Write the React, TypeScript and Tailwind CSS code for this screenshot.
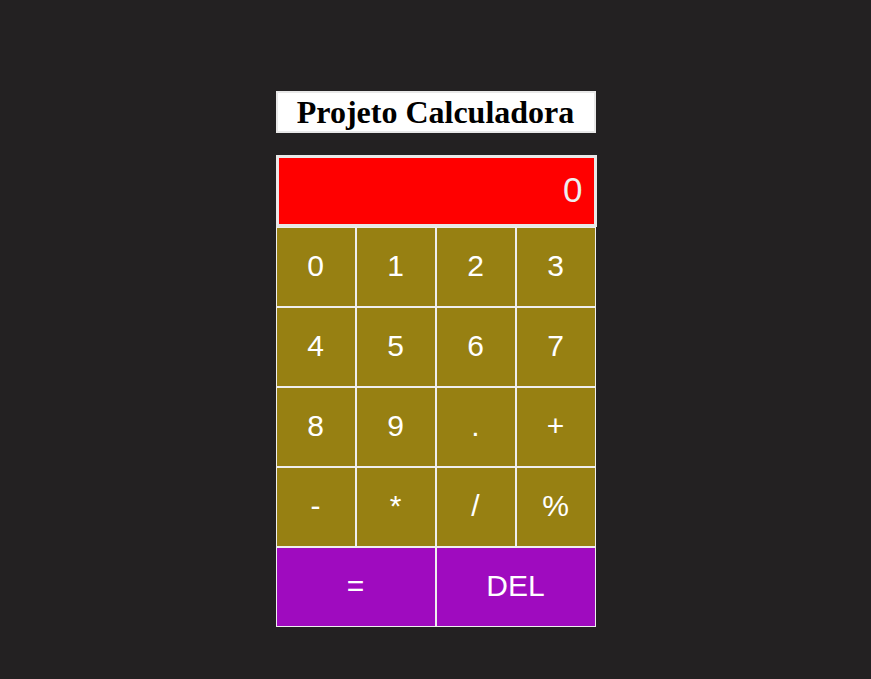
import React from "react";

const keys = ["0", "1", "2", "3", "4", "5", "6", "7", "8", "9", ".", "+", "-", "*", "/", "%"];

export default function App() {
  return (
    <div className="min-h-[679px] w-full bg-[#232122] flex justify-center pt-[91px]">
      <div className="w-[320px] flex flex-col">
        <div className="h-[42px] bg-white border-2 border-[#e8e8e8] flex items-center justify-center">
          <h1 className="text-[32px] font-bold text-black leading-none" style={{ fontFamily: '"Liberation Serif", serif' }}>
            Projeto Calculadora
          </h1>
        </div>
        <div
          className="mt-[22px] w-[321px] h-[72px] bg-[#ff0000] border-[3px] border-[#e8e8e8] flex items-center justify-end pr-[11px] pb-[2px] text-[35px] text-[#eeeeee]"
          style={{ fontFamily: '"Liberation Sans", Arial, sans-serif' }}
        >
          0
        </div>
        <div className="grid grid-cols-4" style={{ fontFamily: '"Liberation Sans", Arial, sans-serif' }}>
          {keys.map((k) => (
            <button
              key={k}
              className="h-[80px] bg-[#978012] border border-[#eeeeee] text-white text-[30px] flex items-center justify-center pb-[3px]"
            >
              {k}
            </button>
          ))}
          <button className="col-span-2 h-[80px] bg-[#9f0bbf] border border-[#eeeeee] text-white text-[30px] flex items-center justify-center pb-[3px]">
            =
          </button>
          <button className="col-span-2 h-[80px] bg-[#9f0bbf] border border-[#eeeeee] text-white text-[30px] flex items-center justify-center pb-[3px]">
            DEL
          </button>
        </div>
      </div>
    </div>
  );
}
